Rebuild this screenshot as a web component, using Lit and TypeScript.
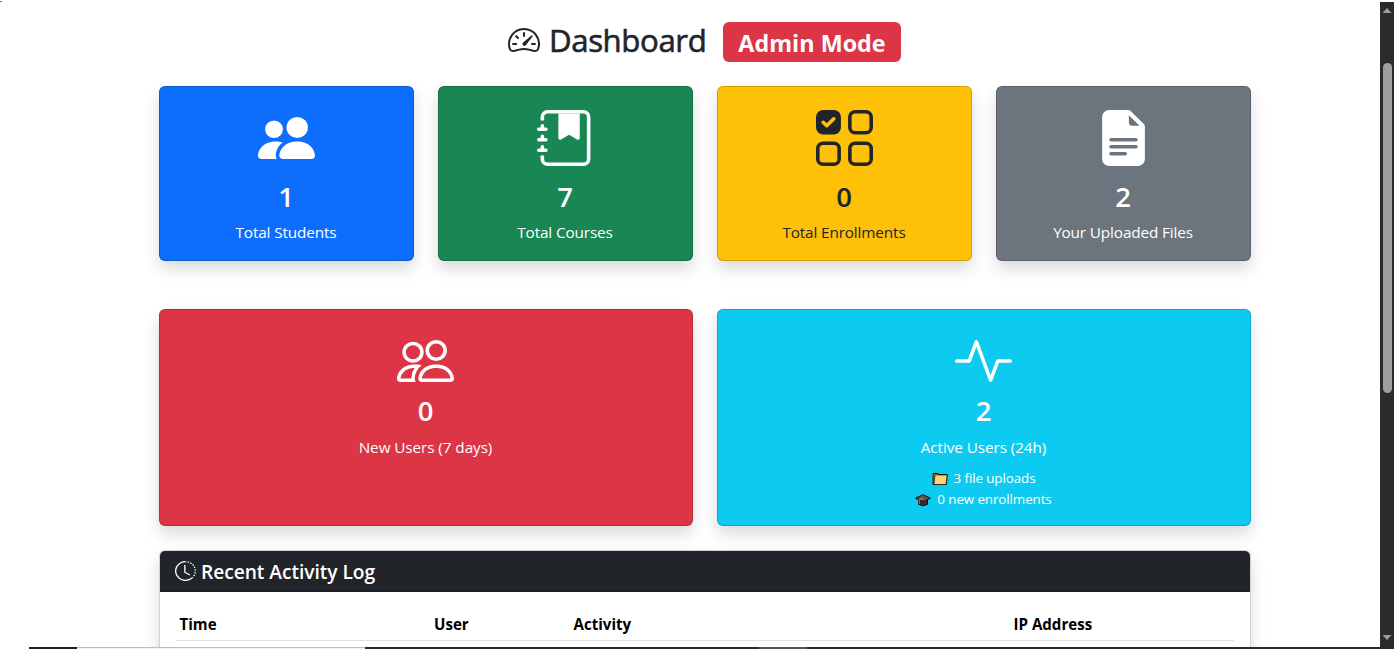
import { LitElement, html, svg, css } from "lit";
import { customElement, property } from "lit/decorators.js";

const ICONS: Record<string, string[]> = {
  speedometer: [
    "M8 4a.5.5 0 0 1 .5.5V6a.5.5 0 0 1-1 0V4.5A.5.5 0 0 1 8 4M3.732 5.732a.5.5 0 0 1 .707 0l.915.914a.5.5 0 1 1-.708.708l-.914-.915a.5.5 0 0 1 0-.707M2 10a.5.5 0 0 1 .5-.5h1.586a.5.5 0 0 1 0 1H2.5A.5.5 0 0 1 2 10m9.5 0a.5.5 0 0 1 .5-.5h1.5a.5.5 0 0 1 0 1H12a.5.5 0 0 1-.5-.5m.754-4.246a.39.39 0 0 0-.527-.02L7.547 9.31a.91.91 0 1 0 1.302 1.258l3.434-4.297a.39.39 0 0 0-.029-.518z",
    "M0 10a8 8 0 1 1 15.547 2.661c-.442 1.253-1.845 1.602-2.932 1.25C11.309 13.488 9.475 13 8 13c-1.474 0-3.31.488-4.615.911-1.087.352-2.49.003-2.932-1.25A8 8 0 0 1 0 10m8-7a7 7 0 0 0-6.603 9.329c.203.575.923.876 1.68.63C4.397 12.533 6.358 12 8 12s3.604.532 4.923.96c.757.245 1.477-.056 1.68-.631A7 7 0 0 0 8 3",
  ],
  peopleFill: [
    "M7 14s-1 0-1-1 1-4 5-4 5 3 5 4-1 1-1 1zm4-6a3 3 0 1 0 0-6 3 3 0 0 0 0 6m-5.784 6A2.24 2.24 0 0 1 5 13c0-1.355.68-2.75 1.936-3.72A6.3 6.3 0 0 0 5 9c-4 0-5 3-5 4s1 1 1 1zM4.5 8a2.5 2.5 0 1 0 0-5 2.5 2.5 0 0 0 0 5",
  ],
  journal: [
    "M6 1h6v7a.5.5 0 0 1-.757.429L9 7.083 6.757 8.43A.5.5 0 0 1 6 8z",
    "M3 0h10a2 2 0 0 1 2 2v12a2 2 0 0 1-2 2H3a2 2 0 0 1-2-2v-1h1v1a1 1 0 0 0 1 1h10a1 1 0 0 0 1-1V2a1 1 0 0 0-1-1H3a1 1 0 0 0-1 1v1H1V2a2 2 0 0 1 2-2",
    "M1 5v-.5a.5.5 0 0 1 1 0V5h.5a.5.5 0 0 1 0 1h-2a.5.5 0 0 1 0-1zm0 3v-.5a.5.5 0 0 1 1 0V8h.5a.5.5 0 0 1 0 1h-2a.5.5 0 0 1 0-1zm0 3v-.5a.5.5 0 0 1 1 0v.5h.5a.5.5 0 0 1 0 1h-2a.5.5 0 0 1 0-1z",
  ],
  checksGrid: [
    "M2 10h3a1 1 0 0 1 1 1v3a1 1 0 0 1-1 1H2a1 1 0 0 1-1-1v-3a1 1 0 0 1 1-1m9-9h3a1 1 0 0 1 1 1v3a1 1 0 0 1-1 1h-3a1 1 0 0 1-1-1V2a1 1 0 0 1 1-1m0 9a1 1 0 0 0-1 1v3a1 1 0 0 0 1 1h3a1 1 0 0 0 1-1v-3a1 1 0 0 0-1-1zm0-10a2 2 0 0 0-2 2v3a2 2 0 0 0 2 2h3a2 2 0 0 0 2-2V2a2 2 0 0 0-2-2zM2 9a2 2 0 0 0-2 2v3a2 2 0 0 0 2 2h3a2 2 0 0 0 2-2v-3a2 2 0 0 0-2-2zm7 2a2 2 0 0 1 2-2h3a2 2 0 0 1 2 2v3a2 2 0 0 1-2 2h-3a2 2 0 0 1-2-2zM0 2a2 2 0 0 1 2-2h3a2 2 0 0 1 2 2v3a2 2 0 0 1-2 2H2a2 2 0 0 1-2-2zm5.354.854a.5.5 0 1 0-.708-.708L3 3.793l-.646-.647a.5.5 0 1 0-.708.708l1 1a.5.5 0 0 0 .708 0z",
  ],
  fileText: [
    "M9.293 0H4a2 2 0 0 0-2 2v12a2 2 0 0 0 2 2h8a2 2 0 0 0 2-2V4.707A1 1 0 0 0 13.707 4L10 .293A1 1 0 0 0 9.293 0M9.5 3.5v-2l3 3h-2a1 1 0 0 1-1-1M4.5 9a.5.5 0 0 1 0-1h7a.5.5 0 0 1 0 1zM4 10.5a.5.5 0 0 1 .5-.5h7a.5.5 0 0 1 0 1h-7a.5.5 0 0 1-.5-.5m.5 2.5a.5.5 0 0 1 0-1h4a.5.5 0 0 1 0 1z",
  ],
  people: [
    "M15 14s1 0 1-1-1-4-5-4-5 3-5 4 1 1 1 1zm-7.978-1L7 12.996c.001-.264.167-1.03.76-1.72C8.312 10.629 9.282 10 11 10c1.717 0 2.687.63 3.24 1.276.593.69.758 1.457.76 1.72l-.008.002-.014.002zM11 7a2 2 0 1 0 0-4 2 2 0 0 0 0 4m3-2a3 3 0 1 1-6 0 3 3 0 0 1 6 0M6.936 9.28a6 6 0 0 0-1.23-.247A7 7 0 0 0 5 9c-4 0-5 3-5 4q0 1 1 1h4.216A2.24 2.24 0 0 1 5 13c0-1.01.377-2.042 1.09-2.904.243-.294.526-.569.846-.816M4.92 10A5.5 5.5 0 0 0 4 13H1c0-.26.164-1.03.76-1.724.545-.636 1.492-1.256 3.16-1.275ZM1.5 5.5a3 3 0 1 1 6 0 3 3 0 0 1-6 0m3-2a2 2 0 1 0 0 4 2 2 0 0 0 0-4",
  ],
  activity: [
    "M6 2a.5.5 0 0 1 .47.33L10 12.036l1.53-4.208A.5.5 0 0 1 12 7.5h3.5a.5.5 0 0 1 0 1h-3.15l-1.88 5.17a.5.5 0 0 1-.94 0L6 3.964 4.47 8.171A.5.5 0 0 1 4 8.5H.5a.5.5 0 0 1 0-1h3.15l1.88-5.17A.5.5 0 0 1 6 2",
  ],
  clock: [
    "M8.515 1.019A7 7 0 0 0 8 1V0a8 8 0 0 1 .589.022zm2.004.45a7 7 0 0 0-.985-.299l.219-.976q.576.129 1.126.342zm1.37.71a7 7 0 0 0-.439-.27l.493-.87a8 8 0 0 1 .979.654l-.615.789a7 7 0 0 0-.418-.302zm1.834 1.79a7 7 0 0 0-.653-.796l.724-.69q.406.429.747.91zm.744 1.352a7 7 0 0 0-.214-.468l.893-.45a8 8 0 0 1 .45 1.088l-.95.313a7 7 0 0 0-.179-.483m.53 2.507a7 7 0 0 0-.1-1.025l.985-.17q.1.58.116 1.17zm-.131 1.538q.05-.254.081-.51l.993.123a8 8 0 0 1-.23 1.155l-.964-.267q.069-.247.12-.501m-.952 2.379q.276-.436.486-.908l.914.405q-.24.54-.555 1.038zm-.964 1.205q.183-.183.35-.378l.758.653a8 8 0 0 1-.401.432z",
    "M8 1a7 7 0 1 0 4.95 11.95l.707.707A8.001 8.001 0 1 1 8 0z",
    "M7.5 3a.5.5 0 0 1 .5.5v5.21l3.248 1.856a.5.5 0 0 1-.496.868l-3.5-2A.5.5 0 0 1 7 9V3.5a.5.5 0 0 1 .5-.5",
  ],
};

@customElement("bi-icon")
class BiIcon extends LitElement {
  @property() name = "";
  static styles = css`
    :host { display: block; width: 1em; height: 1em; flex: none; }
    .glyph { display: block; width: 100%; height: 100%; fill: currentColor; }
  `;
  render() {
    return html`<svg class="glyph" viewBox="0 0 16 16" preserveAspectRatio="none">
      ${(ICONS[this.name] ?? []).map((d) => svg`<path fill-rule="evenodd" d=${d}></path>`)}
    </svg>`;
  }
}

@customElement("stat-card")
class StatCard extends LitElement {
  @property() tone = "";
  @property() icon = "";
  @property() value = "";
  @property() label = "";
  @property({ type: Boolean }) wide = false;
  static styles = css`
    :host { display: block; }
    .card {
      box-sizing: border-box; height: 100%; display: flex; flex-direction: column; align-items: center;
      padding: 23px 17px 0 16px; border: 1px solid rgba(0, 0, 0, 0.175); border-radius: 6px;
      box-shadow: 0 8px 16px rgba(0, 0, 0, 0.15); color: #fff;
    }
    .blue { background-color: #0d6efd; }
    .green { background-color: #198754; }
    .yellow { background-color: #ffc107; color: #212529; }
    .gray { background-color: #6c757d; }
    .red { background-color: #dc3545; }
    .cyan { background-color: #0dcaf0; }
    .icon { font-size: 56px; width: 57px; }
    .value { margin-top: 14px; font-size: 27.5px; line-height: 34px; font-weight: 600; }
    .label { margin-top: 6px; font-size: 15.3px; line-height: 24px; letter-spacing: -0.13px; white-space: nowrap; }
    .wide .value { margin-top: 5px; }
    .wide .label { margin-top: 7px; letter-spacing: -0.08px; }
  `;
  render() {
    return html`<div class="card ${this.tone} ${this.wide ? "wide" : ""}">
      <bi-icon class="icon" name=${this.icon}></bi-icon>
      <div class="value">${this.value}</div>
      <div class="label">${this.label}</div>
      <slot></slot>
    </div>`;
  }
}

@customElement("app-root")
class AppRoot extends LitElement {
  static styles = css`
    :host {
      display: flex; flex-direction: column; height: 649px; overflow: hidden; background: #fff;
      font-family: "Open Sans", "Noto Sans", sans-serif; color: #212529;
    }
    .window { flex: 1; min-height: 0; display: flex; }
    .page { flex: 1; min-width: 0; overflow: hidden; display: flex; flex-direction: column; }
    .speck { flex: none; width: 2px; height: 1px; margin: 1px 0 0; background: #777; }
    .heading { flex: none; display: flex; align-items: flex-start; height: 84px; padding-left: 508px; }
    .title-icon { font-size: 32px; margin: 22px 9px 0 0; }
    .title {
      font-size: 31.2px; line-height: 38px; margin-top: 19px; width: 174px; letter-spacing: -0.4px; white-space: nowrap;
      -webkit-text-stroke: 0.6px currentColor;
    }
    .badge {
      margin-top: 20px; width: 178px; height: 40px; border-radius: 6px; background: #dc3545; color: #fff;
      text-align: center; font-size: 23.3px; line-height: 43px; font-weight: 700; letter-spacing: 0.02px; white-space: nowrap;
    }
    .content { flex: none; width: 1092px; margin-left: 159px; }
    .stats { display: grid; grid-template-columns: repeat(4, 1fr); grid-template-rows: 175px; gap: 24px; }
    .trends { display: grid; grid-template-columns: repeat(2, 1fr); grid-template-rows: 217px; gap: 24px; margin-top: 48px; }
    .details { margin-top: 9px; font-size: 13.4px; line-height: 21px; letter-spacing: -0.1px; }
    .detail { display: flex; align-items: center; justify-content: center; gap: 6px; white-space: nowrap; }
    .emoji { width: 16px; height: 16px; }
    .log {
      box-sizing: border-box; margin-top: 24px; height: 200px; border: 1px solid rgba(0, 0, 0, 0.175);
      border-radius: 6px; box-shadow: 0 8px 16px rgba(0, 0, 0, 0.15); overflow: hidden; background: #fff;
    }
    .log-head {
      box-sizing: border-box; height: 41px; display: flex; align-items: center; gap: 5px; padding: 0 15px 0;
      background: #212529; color: #fff; border-bottom: 1px solid #1b1e21;
      font-size: 19.2px; font-weight: 600; letter-spacing: -0.05px;
    }
    .log-title { padding-top: 1px; }
    .log-icon { font-size: 20px; width: 21px; }
    .columns {
      display: grid; grid-template-columns: 254.5px 139.5px 440px 1fr; margin: 16px 16px 0; padding-left: 3.5px; height: 32px;
      border-bottom: 1px solid #dee2e6; color: #000; font-size: 15.1px; line-height: 32px; font-weight: 700;
    }
    .scrollbar { width: 14px; margin-top: 2px; background: #2b2b2b; display: flex; flex-direction: column; align-items: center; }
    .up { width: 9px; height: 5px; margin-top: 6px; background: #9f9f9f; clip-path: polygon(50% 0, 100% 100%, 0 100%); }
    .thumb { width: 9px; height: 330px; margin-top: 50px; border-radius: 5px; background: #9f9f9f; }
    .down { width: 9px; height: 5px; margin-top: 242px; background: #9f9f9f; clip-path: polygon(0 0, 100% 0, 50% 100%); }
    .strip { display: grid; grid-template-columns: 48px 288px 394px 48px 1fr; height: 2px; margin-left: 29px; background: #2b2b2b; }
    .strip-dark { background: #231f20; }
    .strip-light { background: linear-gradient(#bdbdbd 50%, #f4f4f4 50%); }
    .strip-mid { background: #555; grid-column: 4; }
  `;
  render() {
    return html`
      <div class="window">
        <div class="page">
          <div class="speck"></div>
          <div class="heading">
            <bi-icon class="title-icon" name="speedometer"></bi-icon>
            <div class="title">Dashboard</div>
            <div class="badge">Admin Mode</div>
          </div>
          <div class="content">
            <div class="stats">
              <stat-card tone="blue" icon="peopleFill" value="1" label="Total Students"></stat-card>
              <stat-card tone="green" icon="journal" value="7" label="Total Courses"></stat-card>
              <stat-card tone="yellow" icon="checksGrid" value="0" label="Total Enrollments"></stat-card>
              <stat-card tone="gray" icon="fileText" value="2" label="Your Uploaded Files"></stat-card>
            </div>
            <div class="trends">
              <stat-card wide tone="red" icon="people" value="0" label="New Users (7 days)"></stat-card>
              <stat-card wide tone="cyan" icon="activity" value="2" label="Active Users (24h)">
                <div class="details">
                  <div class="detail">
                    <svg class="emoji" viewBox="0 0 16 16">
                      <path d="M1.2 2.5h4.600l1.200 1h8.200l-.8 10H1z" fill="#d98a12" stroke="#111" stroke-linejoin="round"></path>
                      <path d="M3 3.900h12.200l-1.200 9.600H2z" fill="#ffd475" stroke="#111" stroke-width=".7" stroke-linejoin="round"></path>
                    </svg>
                    <span>3 file uploads</span>
                  </div>
                  <div class="detail">
                    <svg class="emoji" viewBox="0 0 16 16">
                      <path d="M3.500 7.500v4.800q4.500 3 9 0V7.500z" fill="#333" stroke="#111" stroke-linejoin="round"></path>
                      <path d="M.6 6.200 8 2.600l7.400 3.600L8.200 10z" fill="#555" stroke="#111" stroke-linejoin="round"></path>
                      <path d="M8 6 4.200 7.800v4" fill="none" stroke="#e09a2b" stroke-width=".9"></path>
                    </svg>
                    <span>0 new enrollments</span>
                  </div>
                </div>
              </stat-card>
            </div>
            <div class="log">
              <div class="log-head">
                <bi-icon class="log-icon" name="clock"></bi-icon>
                <span class="log-title">Recent Activity Log</span>
              </div>
              <div class="columns">
                <span>Time</span><span>User</span><span>Activity</span><span>IP Address</span>
              </div>
            </div>
          </div>
        </div>
        <div class="scrollbar">
          <div class="up"></div>
          <div class="thumb"></div>
          <div class="down"></div>
        </div>
      </div>
      <div class="strip">
        <div class="strip-dark"></div>
        <div class="strip-light"></div>
        <div class="strip-mid"></div>
      </div>
    `;
  }
}
